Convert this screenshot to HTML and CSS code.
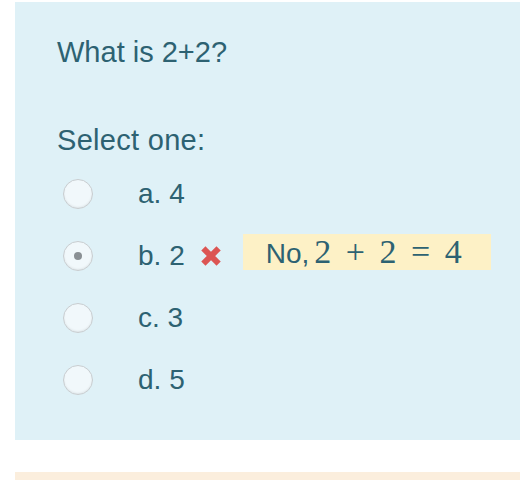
FILE: index.html
```html
<!DOCTYPE html>
<html lang="en">
<head>
  <meta charset="UTF-8">
  <title>Question</title>
  <link rel="stylesheet" href="styles.css">
</head>
<body>
  <div class="que">
    <div class="qtext">What is 2+2?</div>

    <div class="prompt">Select one:</div>
    <div class="answer">
      <label class="opt">
        <span class="radio"></span>
        <span class="opt-text">a. 4</span>
      </label>
      <label class="opt">
        <span class="radio checked"></span>
        <span class="opt-text">b. 2</span>
        <svg class="wrong" width="20" height="20" viewBox="0 0 20 20">
          <path d="M4.5 4.5 L15.5 15.5 M15.5 4.5 L4.5 15.5" stroke="#dc5553" stroke-width="6" stroke-linecap="square"/>
        </svg>
        <span class="feedback">No,<span class="math">2 + 2 = 4</span></span>
      </label>
      <label class="opt">
        <span class="radio"></span>
        <span class="opt-text">c. 3</span>
      </label>
      <label class="opt">
        <span class="radio"></span>
        <span class="opt-text">d. 5</span>
      </label>
    </div>
  </div>
  <div class="outcome"></div>
</body>
</html>
```

FILE: styles.css
```css
* { box-sizing: border-box; }

body {
  margin: 0;
  background: #fff;
  font-family: 'Liberation Sans', Arial, sans-serif;
  color: #2d6272;
}

.que {
  margin: 2px 0 0 15px;
  height: 438px;
  background: #dff1f7;
  padding: 32px 0 0 42px;
}

.qtext {
  font-size: 29px;
  line-height: 36px;
}

.prompt {
  margin-top: 52px;
  font-size: 29px;
  letter-spacing: 0.3px;
  line-height: 36px;
}

.answer {
  margin-top: 5px;
}

.opt {
  display: flex;
  align-items: center;
  height: 62px;
  font-size: 28px;
}

.opt > * {
  flex-shrink: 0;
}

.radio {
  width: 30px;
  height: 30px;
  margin-left: 6px;
  border: 1px solid #c8cdd0;
  border-radius: 50%;
  background: #f1f8fb;
  box-shadow: inset 0 -1px 2px rgba(0,0,0,0.08);
  display: flex;
  align-items: center;
  justify-content: center;
}

.radio.checked::after {
  content: "";
  width: 8px;
  height: 8px;
  border-radius: 50%;
  background: #8a9094;
}

.opt-text {
  margin-left: 45px;
}

.wrong {
  margin-left: 16px;
}

.feedback {
  margin: 0 0 8px 22px;
  background: #fdf1c6;
  padding: 0 29px 0 23px;
  height: 36px;
  line-height: 36px;
  font-size: 28px;
  white-space: nowrap;
}

.math {
  font-family: 'Liberation Serif', 'Times New Roman', serif;
  font-size: 34px;
  word-spacing: 6px;
  margin-left: 5px;
}

.outcome {
  margin: 32px 0 0 15px;
  height: 20px;
  background: #fbeedd;
}
```
